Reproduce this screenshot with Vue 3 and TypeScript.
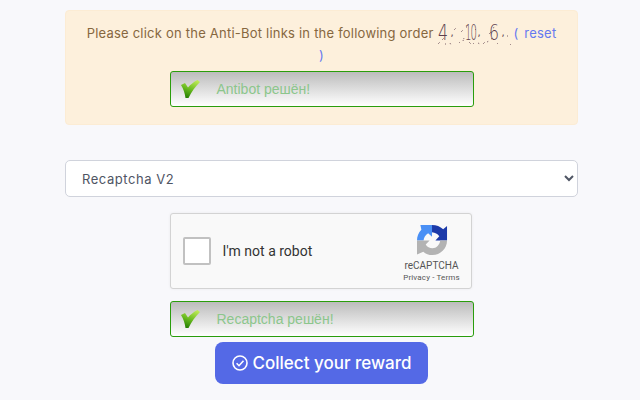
<script setup lang="ts">
const order: string[] = ['4', '10', '6']
</script>

<template>
  <main class="page">
    <section class="alert">
      <p class="prompt">
        Please click on the Anti-Bot links in the following order
        <span class="captcha">
          <span v-for="n in order" :key="n" class="digit"><b class="num">{{ n }}</b><i class="comma">,</i></span>
          <svg class="noise" viewBox="0 0 76 24" aria-hidden="true">
            <path d="M1 22l2-2M5 18l2-2M8 22h1M13 21l1 2M17 8l2-2M22 20l1 1M24 10l2-2M26 19l1-3M29 5h1M32 20l2 2M36 22l1-1M38 7l1 1M41 21l2 1M46 22l2-2M50 20l2-1M52 12l2-2M56 6l2-1M54 17l2-1M60 21l1 1M70 14h1M73 23l1-1" />
          </svg>
        </span>
        <a class="reset" href="#">( reset<br />)</a>
      </p>
      <div class="status">
        <svg class="check" viewBox="0 0 19 18" aria-hidden="true">
          <defs>
            <linearGradient id="tick" x1="0.7" y1="0" x2="0.3" y2="1">
              <stop offset="0" stop-color="#bdea58" />
              <stop offset="0.55" stop-color="#66b81e" />
              <stop offset="1" stop-color="#237d00" />
            </linearGradient>
          </defs>
          <path d="M0 5 4 3 7 7.500C9.500 4.500 12.500 2 16.500 0L19 2C14.500 6.500 10.500 11.500 7.500 18H4.500C4 13.500 2.400 9 0 5Z" fill="url(#tick)" />
        </svg>
        <span>Antibot решён!</span>
      </div>
    </section>

    <select class="picker">
      <option>Recaptcha V2</option>
    </select>

    <div class="recaptcha">
      <span class="box"></span>
      <span class="robot">I'm not a robot</span>
      <div class="brand">
        <svg class="logo" viewBox="0 0 32 32" aria-hidden="true">
          <path d="M0 16C0 12 1.500 8 4.500 5L3.500 0H15.500V12L11.500 8.500C8.500 10.500 7 13 6.800 16Z" fill="#4a90f5" />
          <path d="M15.500 0C20 0 24 1.500 27 4.500L31 1V16H19L23 11.500C21 9 19 8 15.500 7.600Z" fill="#1c3aa9" />
          <path d="M0 16H13L9 20C10.500 22.500 13 24 16 24C20 24 23.500 20.500 24 16H31C31 24.500 24 31 16 31C12 31 9 30 6.500 27.500L0 30.500Z" fill="#b3b3b3" />
        </svg>
        <span class="brand-name">reCAPTCHA</span>
        <span class="brand-links">Privacy - Terms</span>
      </div>
    </div>

    <div class="status lower">
      <svg class="check" viewBox="0 0 19 18" aria-hidden="true">
        <path d="M0 5 4 3 7 7.500C9.500 4.500 12.500 2 16.500 0L19 2C14.500 6.500 10.500 11.500 7.500 18H4.500C4 13.500 2.400 9 0 5Z" fill="url(#tick)" />
      </svg>
      <span>Recaptcha решён!</span>
    </div>

    <button class="collect" type="button">
      <svg class="done" viewBox="0 0 16 16" aria-hidden="true">
        <circle cx="8" cy="8" r="7" />
        <path d="M4.600 8.300 7 10.700 11.500 5.800" />
      </svg>
      Collect your reward
    </button>
  </main>
</template>

<style>
html,
body {
  margin: 0;
  background: #f8f8fb;
}
</style>

<style scoped>
.page {
  box-sizing: border-box;
  width: 640px;
  height: 400px;
  padding: 10px 62px 0 65px;
  overflow: hidden;
  background: #f8f8fb;
  font-family: Inter, "Noto Sans", sans-serif;
  display: flex;
  flex-direction: column;
  align-items: center;
}
.alert {
  box-sizing: border-box;
  width: 513px;
  height: 115px;
  padding: 12px 18px 0;
  background: #fdf0dc;
  border: 1px solid #fcecd4;
  border-radius: 4px;
  display: flex;
  flex-direction: column;
  align-items: center;
}
.prompt {
  margin: -1px 0 5px;
  width: 100%;
  height: 44px;
  font-size: 13px;
  line-height: 22px;
  letter-spacing: 0.22px;
  text-align: center;
  color: #86673f;
  white-space: nowrap;
}
.captcha {
  position: relative;
  display: inline-flex;
  width: 76px;
  height: 22px;
  vertical-align: top;
  color: #5c3d4c;
  font-family: "DejaVu Sans", sans-serif;
  font-size: 22px;
  line-height: 22px;
  letter-spacing: -2px;
  text-align: left;
}
.digit {
  display: flex;
  flex: none;
  width: 24px;
  padding-left: 1px;
  box-sizing: border-box;
  white-space: nowrap;
}
.digit:first-child {
  width: 27px;
}
.num {
  display: block;
  flex: none;
  width: 12px;
  font-weight: 200;
  transform: scaleX(0.72);
  transform-origin: left center;
}
.digit:nth-child(2) .num {
  transform: scaleX(0.46);
}
.comma {
  font-style: normal;
  font-size: 10px;
  letter-spacing: 0;
}
.noise {
  position: absolute;
  left: 0;
  top: 0;
  width: 76px;
  height: 24px;
  fill: none;
  stroke: #5c3d4c;
  stroke-width: 0.8;
  stroke-dasharray: 1 1;
}
.reset {
  color: #6579f0;
  text-decoration: none;
  word-spacing: 2px;
}
.status {
  box-sizing: border-box;
  width: 304px;
  height: 36px;
  padding-left: 10px;
  border: 1px solid #2a9d0c;
  border-radius: 3px;
  background: linear-gradient(#bcbcbc, #ffffff);
  display: flex;
  align-items: center;
  gap: 17px;
  font-family: "Liberation Sans", Arial, sans-serif;
  font-size: 14px;
  color: #8cc68c;
  flex-shrink: 0;
}
.check {
  width: 19px;
  height: 18px;
  flex-shrink: 0;
}
.picker {
  box-sizing: border-box;
  margin-top: 35px;
  width: 513px;
  height: 37px;
  padding: 6px 12px;
  border: 1px solid #d0d3dc;
  border-radius: 5px;
  background-color: #fff;
  color: #4f5564;
  font-family: Inter, "Noto Sans", sans-serif;
  font-size: 13px;
  letter-spacing: 0.55px;
  flex-shrink: 0;
}
.recaptcha {
  box-sizing: border-box;
  margin-top: 16px;
  margin-right: 2px;
  width: 302px;
  height: 76px;
  padding-left: 12px;
  background: #f9f9f9;
  border: 1px solid #d3d3d3;
  border-radius: 3px;
  box-shadow: 0 0 3px rgba(0, 0, 0, 0.06);
  display: flex;
  align-items: center;
  flex-shrink: 0;
  position: relative;
}
.box {
  box-sizing: border-box;
  width: 28px;
  height: 28px;
  background: #fff;
  border: 2px solid #c1c1c1;
  border-radius: 2px;
  flex-shrink: 0;
}
.robot {
  margin-left: 12px;
  font-family: Roboto, sans-serif;
  font-size: 14px;
  color: #333;
}
.brand {
  margin-left: auto;
  width: 78px;
  display: flex;
  flex-direction: column;
  align-items: center;
  color: #555;
  font-family: Roboto, sans-serif;
}
.logo {
  width: 31px;
  height: 31px;
  margin-top: 5px;
  margin-left: 2px;
}
.brand-name {
  margin-top: 3px;
  font-size: 10px;
  line-height: 13px;
}
.brand-links {
  font-size: 8px;
  line-height: 11px;
  letter-spacing: 0.15px;
}
.lower {
  margin-top: 12px;
}
.collect {
  box-sizing: border-box;
  margin-top: 5px;
  width: 213px;
  height: 42px;
  border: 0;
  border-radius: 8px;
  background: #5469e6;
  color: #fff;
  font-family: Inter, "Noto Sans", sans-serif;
  font-size: 17px;
  font-weight: 500;
  display: flex;
  align-items: center;
  justify-content: center;
  gap: 5px;
  flex-shrink: 0;
}
.done {
  width: 16px;
  height: 16px;
  fill: none;
  stroke: #fff;
  stroke-width: 1.600;
}
</style>
